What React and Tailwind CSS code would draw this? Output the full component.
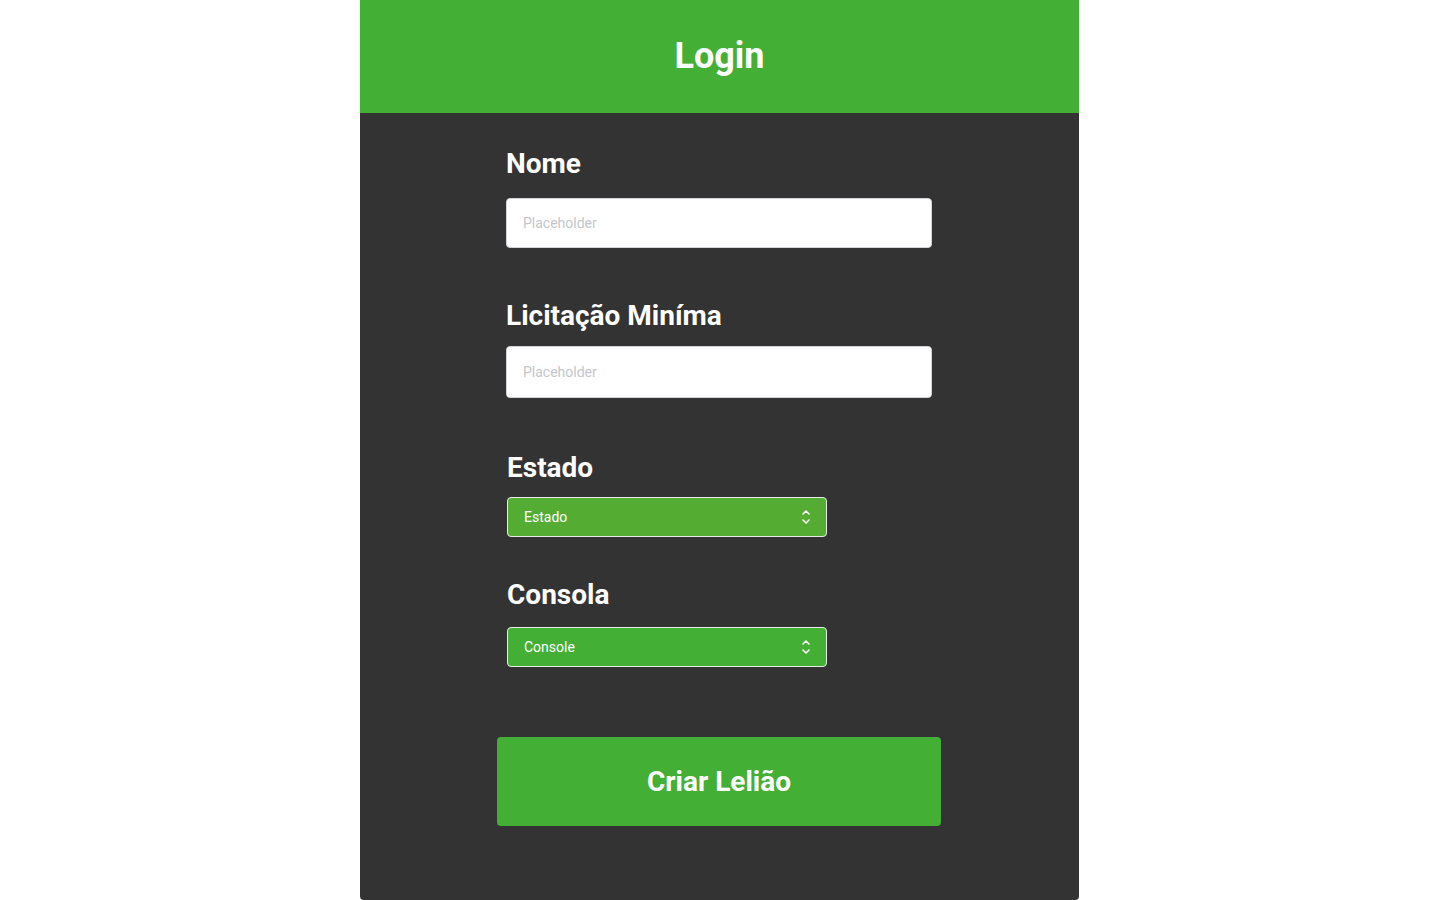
import React from 'react';

function Arrows() {
  return (
    <svg width="10" height="18" viewBox="0 0 10 18" fill="none" stroke="white" strokeWidth="1.6" strokeLinecap="round" strokeLinejoin="round">
      <path d="M2 6 L5 3 L8 6" />
      <path d="M2 12 L5 15 L8 12" />
    </svg>
  );
}

function Field({ label, className, inputClass }) {
  return (
    <div className={className}>
      <h2 className="text-[28px] leading-[32px] font-bold text-white">{label}</h2>
      <input
        type="text"
        placeholder="Placeholder"
        className={`w-[426px] bg-white border border-[#d0d4d8] rounded-[4px] px-4 text-[14px] text-gray-800 placeholder:text-[#c3c7cb] outline-none ${inputClass}`}
      />
    </div>
  );
}

function SelectBox({ label, value, bg, className, boxClass }) {
  return (
    <div className={`pl-px ${className}`}>
      <h2 className="text-[28px] leading-[32px] font-bold text-white">{label}</h2>
      <div className={`w-[320px] h-[40px] ${bg} ${boxClass} border border-[#e8ece8] rounded-[4px] flex items-center justify-between pl-4 pr-[15px] text-[14px] text-white`}>
        <span>{value}</span>
        <Arrows />
      </div>
    </div>
  );
}

export default function App() {
  return (
    <div className="min-h-screen bg-white" style={{ fontFamily: 'Roboto, "Liberation Sans", sans-serif' }}>
      <div className="ml-[360px] w-[719px] h-[900px] flex flex-col rounded-b-[4px] overflow-hidden">
        <header className="h-[113px] bg-[#44af35] flex items-center justify-center">
          <h1 className="text-[36px] font-bold text-white leading-none -mt-[2px]">Login</h1>
        </header>
        <main className="flex-1 bg-[#333333] flex flex-col items-center pt-[35px] pr-px">
          <div className="w-[426px] flex flex-col">
            <Field label="Nome" inputClass="h-[50px] mt-[18px]" />
            <Field label="Licitação Miníma" className="mt-[52px]" inputClass="h-[52px] mt-[14px]" />
            <SelectBox label="Estado" value="Estado" bg="bg-[#55ac33]" className="mt-[54px]" boxClass="mt-[13px]" />
            <SelectBox label="Consola" value="Console" bg="bg-[#44af35]" className="mt-[42px]" boxClass="mt-[16px]" />
          </div>
          <button className="mt-[70px] w-[444px] h-[89px] bg-[#44af35] rounded-[4px] text-white text-[28px] font-bold">
            Criar Lelião
          </button>
        </main>
      </div>
    </div>
  );
}
